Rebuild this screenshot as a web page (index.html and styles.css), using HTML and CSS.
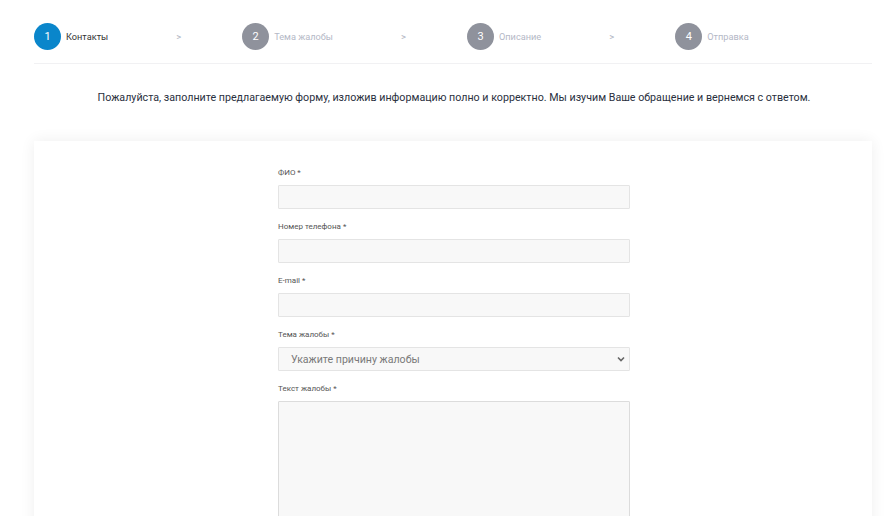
FILE: index.html
```html
<!DOCTYPE html>
<html lang="ru">
<head>
<meta charset="utf-8">
<title>Жалоба</title>
<link rel="stylesheet" href="styles.css">
</head>
<body>
<div class="page">
  <nav class="steps">
    <div class="step active"><span class="num">1</span><span class="label">Контакты</span></div>
    <span class="sep">&gt;</span>
    <div class="step"><span class="num">2</span><span class="label">Тема жалобы</span></div>
    <span class="sep">&gt;</span>
    <div class="step"><span class="num">3</span><span class="label">Описание</span></div>
    <span class="sep">&gt;</span>
    <div class="step"><span class="num">4</span><span class="label">Отправка</span></div>
  </nav>
  <p class="intro">Пожалуйста, заполните предлагаемую форму, изложив информацию полно и корректно. Мы изучим Ваше обращение и вернемся с ответом.</p>
  <div class="card">
    <form class="form">
      <label class="field"><span class="flabel">ФИО *</span><input class="input" type="text"></label>
      <label class="field"><span class="flabel">Номер телефона *</span><input class="input" type="text"></label>
      <label class="field"><span class="flabel">E-mail *</span><input class="input" type="text"></label>
      <label class="field"><span class="flabel">Тема жалобы *</span>
        <span class="select">
          <span class="select-text">Укажите причину жалобы</span>
          <svg class="chev" width="8" height="6" viewBox="0 0 8 6"><path d="M1 1.5 L4 4.5 L7 1.5" fill="none" stroke="#666" stroke-width="1.6"/></svg>
        </span>
      </label>
      <label class="field"><span class="flabel">Текст жалобы *</span><textarea class="textarea"></textarea></label>
    </form>
  </div>
</div>
</body>
</html>
```
FILE: styles.css
```css
* { box-sizing: border-box; }
html, body { margin: 0; padding: 0; background: #fff; }
body { font-family: Roboto, "Noto Sans", sans-serif; color: #333; overflow: hidden; height: 516px; }
.page { padding: 0 24px 0 34px; }
.steps {
  display: flex;
  align-items: center;
  height: 64px;
  padding-top: 9px;
  border-bottom: 1px solid #f1f1f3;
}
.step { display: flex; align-items: center; }
.num {
  width: 27px; height: 27px; border-radius: 50%;
  background: #8f929c; color: #fff;
  display: flex; align-items: center; justify-content: center;
  font-size: 11px;
}
.step.active .num { background: #0a86cb; }
.label { margin-left: 5px; font-size: 9.2px; color: #b4b8c6; }
.step.active .label { color: #333; }
.sep { font-size: 9.5px; color: #b0b4c2; margin: 0 62px 0 68px; width: 4px; }
.intro {
  margin: 27px 0 0;
  text-align: center;
  font-size: 10.7px;
  color: #2a3040;
  padding-left: 2px;
}
.card {
  margin-top: 37px;
  background: #fff;
  box-shadow: 0 0 14px rgba(0,0,0,0.07);
  height: 400px;
  display: flex;
  justify-content: center;
  padding: 27px 0 0;
}
.form { width: 352px; display: flex; flex-direction: column; gap: 13px; margin-left: 2px; }
.field { display: flex; flex-direction: column; }
.flabel { font-size: 8px; color: #555; line-height: 10px; margin-bottom: 7px; }
.input, .select, .textarea {
  width: 100%;
  height: 24px;
  border: 1px solid #e4e4e4;
  background: #f8f8f8;
  border-radius: 1px;
  font: inherit;
  margin: 0;
}
.select { display: flex; align-items: center; justify-content: space-between; padding: 0 4px 0 12px; }
.select-text { font-size: 10.6px; color: #7a7a7a; }
.textarea { height: 130px; resize: none; border-color: #dcdcdc; }
```
